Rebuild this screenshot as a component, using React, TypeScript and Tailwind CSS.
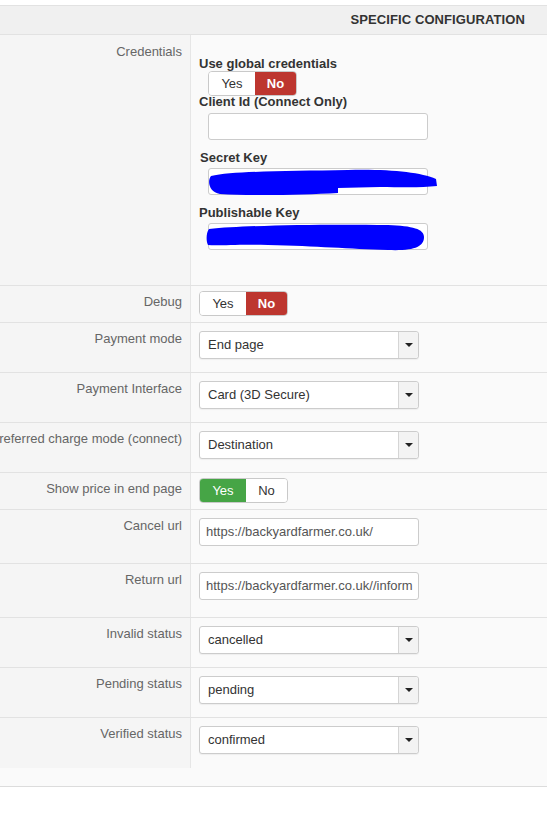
import type { ReactNode } from 'react'

function Toggle({ value }: { value: 'yes' | 'no' }) {
  return (
    <div className="flex h-[25px] w-[89px] rounded-[4px] border border-[#c9c9c9] overflow-hidden text-[13px] font-normal leading-none">
      <div
        className={
          value === 'yes'
            ? 'w-[46px] flex items-center justify-center bg-[#46a546] text-white'
            : 'w-[46px] flex items-center justify-center bg-white text-[#333]'
        }
      >
        Yes
      </div>
      <div
        className={
          value === 'no'
            ? 'flex-1 flex items-center justify-center bg-[#bd362f] text-white font-bold'
            : 'flex-1 flex items-center justify-center bg-white text-[#333]'
        }
      >
        No
      </div>
    </div>
  )
}

function Select({ value }: { value: string }) {
  return (
    <div className="flex h-[28px] w-[220px] rounded-[3px] border border-[#cccccc] bg-white shadow-[0_1px_1px_rgba(0,0,0,0.05)]">
      <div className="flex-1 flex items-center pl-[8px] text-[13px] text-[#333]">{value}</div>
      <div className="w-[20px] flex items-center justify-center border-l border-[#d5d5d5] bg-[#f3f3f3] rounded-r-[3px]">
        <div className="w-0 h-0 border-l-[4px] border-r-[4px] border-t-[4px] border-l-transparent border-r-transparent border-t-[#222]" />
      </div>
    </div>
  )
}

function TextInput({ value, wide }: { value?: string; wide?: boolean }) {
  return (
    <div
      className={
        (wide ? 'w-[220px] h-[27px]' : 'w-[220px] h-[28px]') +
        ' rounded-[3px] border border-[#cccccc] bg-white flex items-center pl-[6px] overflow-hidden whitespace-nowrap text-[13px] text-[#555]'
      }
    >
      {value}
    </div>
  )
}

function Row({
  label,
  height,
  top,
  last,
  children,
}: {
  label: string
  height: string
  top: string
  last?: boolean
  children: ReactNode
}) {
  return (
    <div className={`flex ${height} ${last ? '' : 'border-b border-[#e2e2e2]'}`}>
      <div className="w-[191px] shrink-0 bg-[#f5f5f5] border-r border-[#e6e6e6] flex justify-end overflow-hidden pr-[8px] pt-[7px]">
        <span className="whitespace-nowrap leading-[18px] text-[13px] text-[#666]">{label}</span>
      </div>
      <div className={`flex-1 ${top}`}>{children}</div>
    </div>
  )
}

export default function App() {
  return (
    <div className="w-[547px] h-[821px] bg-white overflow-hidden font-['Liberation_Sans',Arial,sans-serif]">
      <div className="mt-[5px] h-[30px] border-t border-b border-[#e2e2e2] bg-[#f0f0f0] flex items-center justify-end pr-[22px]">
        <span className="text-[13px] font-bold text-[#333] tracking-[0.1px]">SPECIFIC CONFIGURATION</span>
      </div>

      <div className="bg-[#fafafa] border-b border-[#dcdcdc] pb-[18px]">
        {/* credentials */}
        <div className="flex h-[251px] border-b border-[#e2e2e2]">
          <div className="w-[191px] shrink-0 bg-[#f5f5f5] border-r border-[#e6e6e6] flex justify-end pr-[8px] pt-[8px]">
            <span className="leading-[18px] text-[13px] text-[#666]">Credentials</span>
          </div>
          <div className="flex-1 pl-[8px] pt-[21px] flex flex-col items-start text-[13px] font-bold text-[#333]">
            <div className="leading-[16px]">Use global credentials</div>
            <div className="ml-[9px] mt-[-1px]">
              <Toggle value="no" />
            </div>
            <div className="leading-[16px] mt-[-2px]">Client Id (Connect Only)</div>
            <div className="ml-[9px] mt-[3px] font-normal">
              <TextInput wide />
            </div>
            <div className="leading-[16px] mt-[10px] ml-[1px]">Secret Key</div>
            <div className="ml-[9px] mt-[2px] font-normal relative">
              <TextInput wide />
              <svg className="absolute left-0 top-0" width="240" height="30" viewBox="0 0 240 30">
                <path
                  d="M3,8 C25,3 80,3 140,2 C180,1 212,4 228,11 L229,18 C212,20 190,19 172,19 L130,20 L130,25 C95,27 45,28 12,26 C1,24 -1,13 3,8 Z"
                  fill="#0000ff"
                />
              </svg>
            </div>
            <div className="leading-[16px] mt-[10px]">Publishable Key</div>
            <div className="ml-[9px] mt-[2px] font-normal relative">
              <TextInput wide />
              <svg className="absolute left-[-2px] top-0" width="230" height="30" viewBox="-2 0 230 30">
                <path
                  d="M1,6 C40,2 120,1 180,2 C205,3 216,6 216,14 C216,24 206,28 180,27 C140,26 110,23 60,22 C30,21 10,23 0,22 C-2,18 -2,10 1,6 Z"
                  fill="#0000ff"
                />
              </svg>
            </div>
          </div>
        </div>

        <Row label="Debug" height="h-[37px]" top="pt-[5px] pl-[8px]">
          <Toggle value="no" />
        </Row>
        <Row label="Payment mode" height="h-[50px]" top="pt-[8px] pl-[8px]">
          <Select value="End page" />
        </Row>
        <Row label="Payment Interface" height="h-[50px]" top="pt-[8px] pl-[8px]">
          <Select value="Card (3D Secure)" />
        </Row>
        <Row label="Preferred charge mode (connect)" height="h-[50px]" top="pt-[8px] pl-[8px]">
          <Select value="Destination" />
        </Row>
        <Row label="Show price in end page" height="h-[37px]" top="pt-[5px] pl-[8px]">
          <Toggle value="yes" />
        </Row>
        <Row label="Cancel url" height="h-[54px]" top="pt-[8px] pl-[8px]">
          <TextInput value="https://backyardfarmer.co.uk/" />
        </Row>
        <Row label="Return url" height="h-[54px]" top="pt-[8px] pl-[8px]">
          <TextInput value="https://backyardfarmer.co.uk//inform" />
        </Row>
        <Row label="Invalid status" height="h-[50px]" top="pt-[8px] pl-[8px]">
          <Select value="cancelled" />
        </Row>
        <Row label="Pending status" height="h-[50px]" top="pt-[8px] pl-[8px]">
          <Select value="pending" />
        </Row>
        <Row label="Verified status" height="h-[50px]" top="pt-[8px] pl-[8px]" last>
          <Select value="confirmed" />
        </Row>
      </div>
    </div>
  )
}
